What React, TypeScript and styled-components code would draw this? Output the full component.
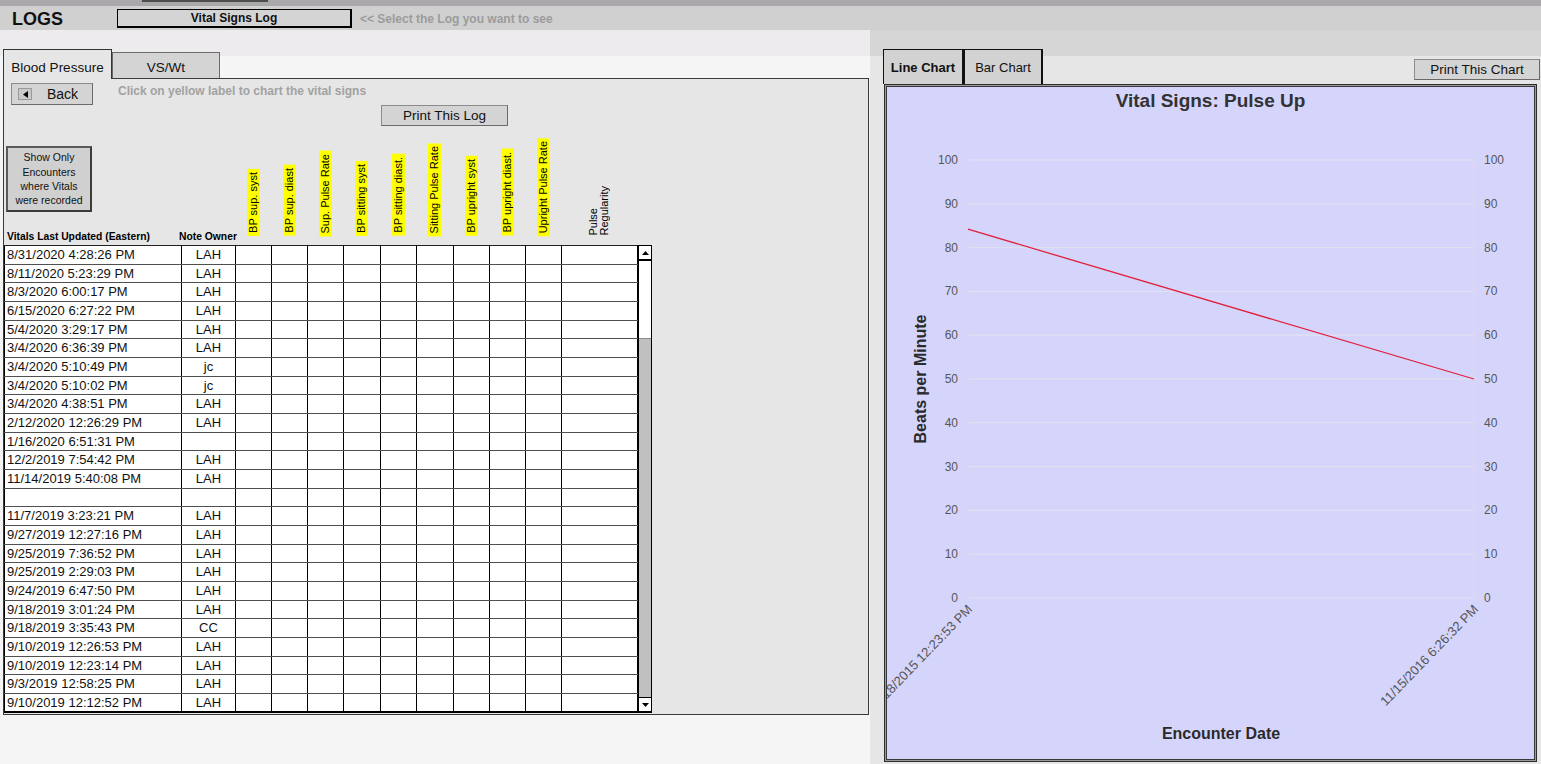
import React from 'react';
import styled, { createGlobalStyle } from 'styled-components';

const FONT = "'Liberation Sans', Arial, sans-serif";

const GlobalStyle = createGlobalStyle`
  html, body {
    margin: 0;
    padding: 0;
  }
  body {
    font-family: ${FONT};
    background: #f5f5f5;
    color: #000;
  }
`;

const COLS = [177, 54, 36, 36, 36, 37, 36, 37, 36, 36, 36, 76];

const VITALS = [
  'BP sup. syst',
  'BP sup. diast',
  'Sup. Pulse Rate',
  'BP sitting syst',
  'BP sitting diast.',
  'Sitting Pulse Rate',
  'BP upright syst',
  'BP upright diast.',
  'Upright Pulse Rate',
];

const ROWS: [string, string][] = [
  ['8/31/2020 4:28:26 PM', 'LAH'],
  ['8/11/2020 5:23:29 PM', 'LAH'],
  ['8/3/2020 6:00:17 PM', 'LAH'],
  ['6/15/2020 6:27:22 PM', 'LAH'],
  ['5/4/2020 3:29:17 PM', 'LAH'],
  ['3/4/2020 6:36:39 PM', 'LAH'],
  ['3/4/2020 5:10:49 PM', 'jc'],
  ['3/4/2020 5:10:02 PM', 'jc'],
  ['3/4/2020 4:38:51 PM', 'LAH'],
  ['2/12/2020 12:26:29 PM', 'LAH'],
  ['1/16/2020 6:51:31 PM', ''],
  ['12/2/2019 7:54:42 PM', 'LAH'],
  ['11/14/2019 5:40:08 PM', 'LAH'],
  ['', ''],
  ['11/7/2019 3:23:21 PM', 'LAH'],
  ['9/27/2019 12:27:16 PM', 'LAH'],
  ['9/25/2019 7:36:52 PM', 'LAH'],
  ['9/25/2019 2:29:03 PM', 'LAH'],
  ['9/24/2019 6:47:50 PM', 'LAH'],
  ['9/18/2019 3:01:24 PM', 'LAH'],
  ['9/18/2019 3:35:43 PM', 'CC'],
  ['9/10/2019 12:26:53 PM', 'LAH'],
  ['9/10/2019 12:23:14 PM', 'LAH'],
  ['9/3/2019 12:58:25 PM', 'LAH'],
  ['9/10/2019 12:12:52 PM', 'LAH'],
];

/* ---------- page frame ---------- */

const Page = styled.div`
  width: 1541px;
  height: 764px;
  overflow: hidden;
  display: flex;
  flex-direction: column;
`;

const TopStrip = styled.div`
  flex: none;
  height: 6px;
  background: #aaa8aa;
  display: flex;
  align-items: flex-start;
  overflow: hidden;
`;

const TopStub = styled.div`
  margin-left: 142px;
  width: 126px;
  height: 2px;
  background: #4d4d4d;
`;

const TopLabel = styled.span<{ $gap: number }>`
  margin-left: ${p => p.$gap}px;
  margin-top: -10px;
  font-size: 12px;
  line-height: 12px;
  font-weight: bold;
  color: #e2e2e2;
  white-space: nowrap;
`;

const HeaderBar = styled.div`
  flex: none;
  height: 24px;
  background: #d0d0d0;
  display: flex;
  align-items: center;
  padding-left: 12px;
`;

const Logo = styled.div`
  width: 105px;
  padding-top: 3px;
  font-size: 18px;
  font-weight: bold;
  color: #111;
`;

const LogSelect = styled.button`
  width: 235px;
  height: 19px;
  box-sizing: border-box;
  padding: 0;
  border: 1px solid #000;
  border-right-width: 2px;
  border-bottom-width: 2px;
  background: #d4d4d4;
  font: bold 12px ${FONT};
  color: #111;
`;

const SelectHint = styled.span`
  margin-left: 8px;
  padding-top: 1px;
  font-size: 12px;
  font-weight: bold;
  color: #9c9c9c;
`;

const Main = styled.div`
  flex: 1;
  min-height: 0;
  display: grid;
  grid-template-columns: 870px 671px;
`;

/* ---------- left: log ---------- */

const LeftColumn = styled.div`
  background: linear-gradient(#eeebee 0 26px, #f5f5f5 26px);
  padding: 19px 0 0 3px;
`;

const TabRow = styled.div`
  height: 29px;
  display: flex;
  align-items: flex-end;
  position: relative;
  z-index: 1;
`;

const Tab = styled.div<{ $active?: boolean }>`
  box-sizing: border-box;
  width: ${p => (p.$active ? 109 : 108)}px;
  height: ${p => (p.$active ? 30 : 26)}px;
  margin-bottom: ${p => (p.$active ? -1 : 0)}px;
  padding-top: ${p => (p.$active ? 6 : 3)}px;
  border: 1px solid ${p => (p.$active ? '#333' : '#6a6a6a')};
  border-bottom: none;
  background: ${p => (p.$active ? '#e6e6e6' : '#d4d4d4')};
  font-size: 13.5px;
  display: flex;
  align-items: center;
  justify-content: center;
  color: #111;
`;

const Panel = styled.section`
  box-sizing: border-box;
  width: 866px;
  height: 637px;
  border: 1px solid #3a3a3a;
  background: #e6e6e6;
`;

const Toolbar = styled.div`
  height: 43px;
  padding: 4px 0 0 7px;
  display: grid;
  grid-template-columns: 107px 1fr;
  grid-template-rows: 22px 21px;
`;

const GrayButton = styled.button<{ $w: number; $h: number }>`
  box-sizing: border-box;
  width: ${p => p.$w}px;
  height: ${p => p.$h}px;
  padding: 0;
  border: 1px solid #8c8c8c;
  border-right-color: #6a6a6a;
  border-bottom-color: #6a6a6a;
  background: #d4d4d4;
  font: 13.5px ${FONT};
  color: #111;
  display: flex;
  align-items: center;
  justify-content: center;
`;

const BackButton = styled(GrayButton)`
  justify-content: flex-start;
  padding-left: 6px;
  gap: 15px;
  font-size: 14px;
`;

const BackIcon = styled.span`
  box-sizing: border-box;
  width: 14px;
  height: 12px;
  border: 1px solid #9a9a9a;
  background: #c9c9c9;
  display: flex;
  align-items: center;
  justify-content: center;
`;

const Hint = styled.div`
  font-size: 12px;
  font-weight: bold;
  color: #a2a2a2;
  padding-top: 1px;
`;

const PrintLog = styled(GrayButton)`
  grid-column: 2;
  grid-row: 2;
  margin-left: 263px;
`;

const HeaderGrid = styled.div`
  margin-top: 11px;
  height: 108px;
  display: grid;
  grid-template-columns: ${COLS.map(c => `${c}px`).join(' ')} 14px;
  align-items: end;
`;

const DateHead = styled.div`
  display: flex;
  flex-direction: column;
  align-items: flex-start;
  gap: 19px;
`;

const ShowOnly = styled.button`
  box-sizing: border-box;
  margin-left: 2px;
  width: 86px;
  height: 66px;
  padding: 0;
  border: 2px solid #3c3c3c;
  border-top-color: #5a5a5a;
  border-left-color: #5a5a5a;
  background: #d0d0d0;
  font: 10.5px/14.3px ${FONT};
  color: #111;
`;

const ColumnTitle = styled.div<{ $center?: boolean }>`
  height: 12px;
  margin-bottom: 2px;
  font-size: 10.3px;
  line-height: 12px;
  font-weight: bold;
  white-space: nowrap;
  display: flex;
  justify-content: ${p => (p.$center ? 'center' : 'flex-start')};
  padding-left: ${p => (p.$center ? 0 : 3)}px;
`;

const VerticalLabel = styled.div<{ $yellow?: boolean }>`
  justify-self: center;
  margin-bottom: 9px;
  writing-mode: vertical-rl;
  transform: rotate(180deg);
  font-size: 11px;
  line-height: ${p => (p.$yellow ? 13 : 11)}px;
  padding: ${p => (p.$yellow ? '3px 0' : '0')};
  background: ${p => (p.$yellow ? '#ffff00' : 'transparent')};
  white-space: ${p => (p.$yellow ? 'nowrap' : 'normal')};
  color: #000;
`;

const BodyWrap = styled.div`
  display: flex;
  align-items: stretch;
`;

const LogTable = styled.table`
  width: 633px;
  table-layout: fixed;
  border-collapse: collapse;
  border-left: 1px solid #000;
  border-top: 1px solid #222;
  border-bottom: 2px solid #000;
  font-size: 13px;

  tr {
    height: 18.68px;
  }
`;

const Cell = styled.td<{ $date?: boolean; $center?: boolean }>`
  padding: 0 0 0 ${p => (p.$date ? 2 : 0)}px;
  background: #fff;
  border-right: 1px solid #000;
  border-bottom: 1px solid #505050;
  white-space: nowrap;
  overflow: hidden;
  text-align: ${p => (p.$center ? 'center' : 'left')};
  line-height: 16px;
  color: #111;
`;

const Scrollbar = styled.div`
  box-sizing: border-box;
  width: 14px;
  border: 1px solid #000;
  border-bottom-width: 2px;
  display: flex;
  flex-direction: column;
  background: #c0c0c0;
`;

const ScrollArrow = styled.div<{ $down?: boolean }>`
  height: 13px;
  background: #fff;
  display: flex;
  align-items: center;
  justify-content: center;
  border-bottom: ${p => (p.$down ? 'none' : '2px solid #000')};
  border-top: ${p => (p.$down ? '1px solid #000' : 'none')};
  margin-top: ${p => (p.$down ? 'auto' : 0)};
`;

const ScrollThumb = styled.div`
  height: 77px;
  background: #fff;
  border-bottom: 1px solid #8a8a8a;
`;

/* ---------- right: chart ---------- */

const RightColumn = styled.div`
  background: linear-gradient(#d7d6d7 0 26px, #e6e6e6 26px);
  padding: 19px 1px 2px 13px;
  display: flex;
  flex-direction: column;
`;

const ChartTabs = styled.div`
  height: 35px;
  display: flex;
`;

const ChartTab = styled.div<{ $active?: boolean; $w: number }>`
  box-sizing: border-box;
  width: ${p => p.$w}px;
  border: 1px solid #111;
  border-bottom: none;
  border-right-width: 2px;
  background: #d2d2d2;
  font-size: 13px;
  font-weight: ${p => (p.$active ? 'bold' : 'normal')};
  display: flex;
  align-items: center;
  justify-content: center;
  color: #111;
`;

const PrintChart = styled(GrayButton)`
  margin-left: auto;
  align-self: flex-end;
  margin-bottom: 4px;
`;

const ChartBox = styled.div`
  flex: 1;
  margin: 0 3px 0 1px;
  border: 1px solid #2e2e2e;
  box-shadow: inset 0 0 0 1px #9a9a9a, inset 0 0 0 2px #3a3a3a;
  padding: 2px;
  background: #d5d5fc;
  display: flex;
  flex-direction: column;
`;

const ChartTitle = styled.div`
  height: 28px;
  line-height: 28px;
  text-align: center;
  font-size: 19px;
  font-weight: bold;
  color: #333;
`;

const AxisTitle = styled.div`
  height: 28px;
  line-height: 28px;
  padding: 0 60px 11px 81px;
  text-align: center;
  font-size: 16px;
  font-weight: bold;
  color: #2a2a2a;
`;

const PLOT = { left: 81, right: 587, top: 45, bottom: 483 };
const yFor = (v: number) => PLOT.bottom - (v / 100) * (PLOT.bottom - PLOT.top);
const TICKS = [0, 10, 20, 30, 40, 50, 60, 70, 80, 90, 100];

const LineChart = () => (
  <svg width={647} height={605} viewBox="0 0 647 605" style={{ display: 'block' }}>
    {TICKS.map(t => (
      <g key={t}>
        <line x1={PLOT.left} x2={PLOT.right} y1={yFor(t)} y2={yFor(t)} stroke="#e4e2ee" strokeWidth={1} />
        <text x={71} y={yFor(t) + 4} textAnchor="end" fontSize={12} fill="#555" fontFamily={FONT}>
          {t}
        </text>
        <text x={597} y={yFor(t) + 4} textAnchor="start" fontSize={12} fill="#555" fontFamily={FONT}>
          {t}
        </text>
      </g>
    ))}
    <line x1={PLOT.left} x2={PLOT.left} y1={PLOT.top} y2={PLOT.bottom} stroke="#e2d4ee" />
    <line x1={PLOT.right} x2={PLOT.right} y1={PLOT.top} y2={PLOT.bottom} stroke="#e2d4ee" />
    <line x1={PLOT.left} y1={yFor(84.2)} x2={PLOT.right} y2={yFor(50)} stroke="#e0203c" strokeWidth={1.3} />
    <text
      transform={`translate(35 ${(PLOT.top + PLOT.bottom) / 2}) rotate(-90)`}
      textAnchor="middle"
      dominantBaseline="middle"
      fontSize={16}
      fontWeight="bold"
      fill="#2a2a2a"
      fontFamily={FONT}
    >
      Beats per Minute
    </text>
    <text
      transform={`translate(${PLOT.left + 5} ${PLOT.bottom + 12}) rotate(-46)`}
      textAnchor="end"
      fontSize={13}
      fill="#555"
      fontFamily={FONT}
    >
      11/18/2015 12:23:53 PM
    </text>
    <text
      transform={`translate(${PLOT.right + 5} ${PLOT.bottom + 12}) rotate(-46)`}
      textAnchor="end"
      fontSize={13}
      fill="#555"
      fontFamily={FONT}
    >
      11/15/2016 6:26:32 PM
    </text>
  </svg>
);

const App = () => (
  <Page>
    <GlobalStyle />
    <TopStrip>
      <TopStub />
      <TopLabel $gap={582}>Patient's Name</TopLabel>
      <TopLabel $gap={154}>Patient's ID</TopLabel>
    </TopStrip>
    <HeaderBar>
      <Logo>LOGS</Logo>
      <LogSelect>Vital Signs Log</LogSelect>
      <SelectHint>&lt;&lt; Select the Log you want to see</SelectHint>
    </HeaderBar>
    <Main>
      <LeftColumn>
        <TabRow>
          <Tab $active>Blood Pressure</Tab>
          <Tab>VS/Wt</Tab>
        </TabRow>
        <Panel>
          <Toolbar>
            <BackButton $w={82} $h={22}>
              <BackIcon>
                <svg width="5" height="7" viewBox="0 0 5 7">
                  <path d="M5 0 L0 3.5 L5 7 Z" fill="#000" />
                </svg>
              </BackIcon>
              Back
            </BackButton>
            <Hint>Click on yellow label to chart the vital signs</Hint>
            <PrintLog $w={127} $h={21}>Print This Log</PrintLog>
          </Toolbar>
          <HeaderGrid>
            <DateHead>
              <ShowOnly>
                Show Only
                <br />
                Encounters
                <br />
                where Vitals
                <br />
                were recorded
              </ShowOnly>
              <ColumnTitle>Vitals Last Updated (Eastern)</ColumnTitle>
            </DateHead>
            <ColumnTitle $center>Note Owner</ColumnTitle>
            {VITALS.map(v => (
              <VerticalLabel key={v} $yellow>
                {v}
              </VerticalLabel>
            ))}
            <VerticalLabel>
              Pulse
              <br />
              Regularity
            </VerticalLabel>
          </HeaderGrid>
          <BodyWrap>
            <LogTable>
              <colgroup>
                {COLS.map((c, i) => (
                  <col key={i} style={{ width: c }} />
                ))}
              </colgroup>
              <tbody>
                {ROWS.map(([date, owner], i) => (
                  <tr key={i}>
                    <Cell $date>{date}</Cell>
                    <Cell $center>{owner}</Cell>
                    {COLS.slice(2).map((_, j) => (
                      <Cell key={j} />
                    ))}
                  </tr>
                ))}
              </tbody>
            </LogTable>
            <Scrollbar>
              <ScrollArrow>
                <svg width="7" height="4" viewBox="0 0 7 4">
                  <path d="M0 4 L3.5 0 L7 4 Z" fill="#000" />
                </svg>
              </ScrollArrow>
              <ScrollThumb />
              <ScrollArrow $down>
                <svg width="7" height="4" viewBox="0 0 7 4">
                  <path d="M0 0 L3.5 4 L7 0 Z" fill="#000" />
                </svg>
              </ScrollArrow>
            </Scrollbar>
          </BodyWrap>
        </Panel>
      </LeftColumn>
      <RightColumn>
        <ChartTabs>
          <ChartTab $active $w={81}>
            Line Chart
          </ChartTab>
          <ChartTab $w={79}>Bar Chart</ChartTab>
          <PrintChart $w={126} $h={21}>
            Print This Chart
          </PrintChart>
        </ChartTabs>
        <ChartBox>
          <ChartTitle>Vital Signs: Pulse Up</ChartTitle>
          <LineChart />
          <AxisTitle>Encounter Date</AxisTitle>
        </ChartBox>
      </RightColumn>
    </Main>
  </Page>
);

export default App;
